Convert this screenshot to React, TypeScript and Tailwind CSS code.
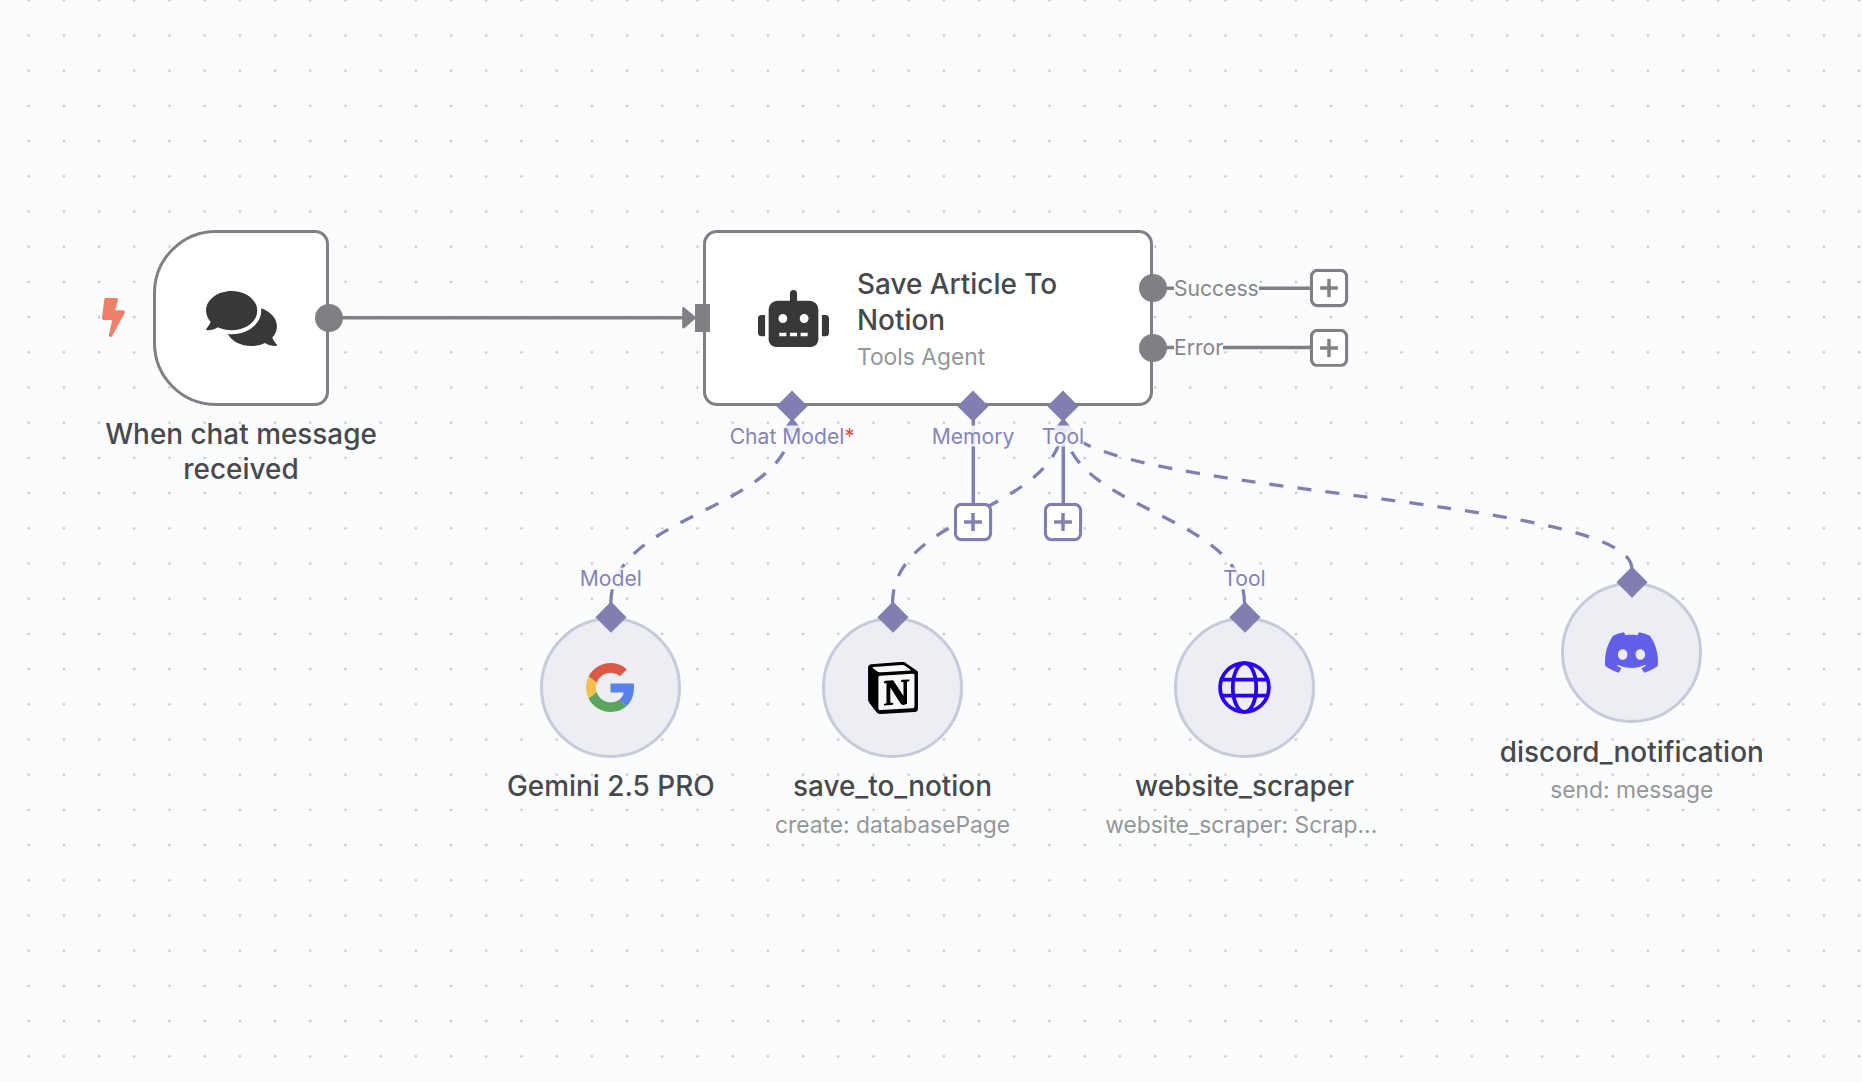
import type { ReactNode } from 'react';
import { FaBolt, FaComments, FaRobot } from 'react-icons/fa';
import { SiDiscord, SiNotion } from 'react-icons/si';

const GRID = 35.2;
const GRAY = '#7f8084';
const PURPLE = '#817fb1';

interface Point {
  x: number;
  y: number;
}

interface ToolNode extends Point {
  key: string;
  label: string;
  subtitle?: string;
  handle?: string;
  icon: ReactNode;
  target: Point;
}

const CHAT_MODEL: Point = { x: 792.3, y: 420.5 };
const TOOL: Point = { x: 1063.3, y: 420.5 };

const toolNodes: ToolNode[] = [
  { key: 'gemini', x: 610.8, y: 617.2, label: 'Gemini 2.5 PRO', handle: 'Model', icon: <GoogleIcon />, target: CHAT_MODEL },
  {
    key: 'notion',
    x: 892.5,
    y: 617.2,
    label: 'save_to_notion',
    subtitle: 'create: databasePage',
    icon: <NotionIcon />,
    target: TOOL,
  },
  {
    key: 'scraper',
    x: 1244.5,
    y: 617.2,
    label: 'website_scraper',
    subtitle: 'website_scraper: Scrap...\u00a0',
    handle: 'Tool',
    icon: <GlobeIcon />,
    target: TOOL,
  },
  {
    key: 'discord',
    x: 1631.8,
    y: 582.4,
    label: 'discord_notification',
    subtitle: 'send: message',
    icon: <SiDiscord className="size-[53px] text-[#6260e8]" />,
    target: TOOL,
  },
];

function GoogleIcon() {
  return (
    <svg viewBox="0 0 48 48" className="size-[49px]">
      <path fill="#dc5a45" d="M24 9.5c3.54 0 6.71 1.22 9.21 3.6l6.85-6.85C35.9 2.38 30.47 0 24 0 14.62 0 6.51 5.38 2.56 13.22l7.98 6.19C12.43 13.72 17.74 9.5 24 9.5z" />
      <path fill="#5981ea" d="M46.9 20H24v9.02h12.94c-.58 2.96-2.26 5.48-4.78 7.18l7.73 6c4.51-4.18 7.09-10.36 7.09-17.65z" />
      <path fill="#f2c14d" d="M10.53 28.59c-.48-1.45-.76-2.99-.76-4.59s.27-3.14.76-4.59l-7.98-6.19C.92 16.46 0 20.12 0 24c0 3.88.92 7.54 2.56 10.78l7.97-6.19z" />
      <path fill="#59a65c" d="M24 48c6.48 0 11.93-2.13 15.89-5.81l-7.73-6c-2.15 1.45-4.92 2.3-8.16 2.3-6.26 0-11.57-4.22-13.47-9.91l-7.98 6.19C6.51 42.62 14.62 48 24 48z" />
    </svg>
  );
}

function NotionIcon() {
  return (
    <svg viewBox="0 0 24 24" className="size-[52px] text-black">
      <path d="M3 2.4L17 1.4L21.6 5V21L6 22.4L3 18z" fill="#f8f8fb" />
      <SiNotion size={24} />
    </svg>
  );
}

function GlobeIcon() {
  return (
    <svg viewBox="0 0 53 53" className="size-[53px]" fill="none" stroke="#2a00f5" strokeWidth={3.8}>
      <circle cx={26.5} cy={26.5} r={24.4} />
      <ellipse cx={26.5} cy={26.5} rx={11.7} ry={24.4} />
      <path d="M3 18.6h47M3 34.6h47" />
    </svg>
  );
}

function edgePath(from: Point, to: Point) {
  const mid = (from.y + to.y) / 2;
  return `M${from.x} ${from.y}C${from.x} ${mid} ${to.x} ${mid} ${to.x} ${to.y}`;
}

function Connections() {
  return (
    <svg className="absolute inset-0 size-full" fill="none">
      <defs>
        <pattern id="dots" x={11.1} y={-17.3} width={GRID} height={GRID} patternUnits="userSpaceOnUse">
          <circle cx={GRID / 2} cy={GRID / 2} r={1.3} fill="#c2c3c7" />
        </pattern>
      </defs>
      <rect width="100%" height="100%" fill="url(#dots)" />
      <g stroke={GRAY} strokeWidth={3.5}>
        <path d="M329 317.8H684" />
        <path d="M1153 288.3H1312M1153 347.5H1312" />
      </g>
      <path d="M683.5 308.4v18.8l11-9.4z" fill={GRAY} stroke={GRAY} strokeWidth={2.6} strokeLinejoin="round" />
      <g stroke={PURPLE} strokeWidth={3.5}>
        <path d="M973.3 410V505M1063.3 410V505" />
        {toolNodes.map((n) => (
          <path key={n.key} d={edgePath({ x: n.x, y: n.y - 13.8 }, n.target)} strokeWidth={3.3} strokeDasharray="14.08 14.08" />
        ))}
      </g>
      {[CHAT_MODEL, TOOL].map((p) => (
        <path
          key={p.x}
          d={`M${p.x - 8.8} ${p.y + 10}h17.6l-8.8 -11z`}
          fill={PURPLE}
          stroke={PURPLE}
          strokeWidth={2.2}
          strokeLinejoin="round"
        />
      ))}
    </svg>
  );
}

// Every pin below is centred on its x / y

function Pin({ x, y, children }: Point & { children: ReactNode }) {
  return (
    <div className="absolute -translate-x-1/2 -translate-y-1/2" style={{ left: x, top: y }}>
      {children}
    </div>
  );
}

function Diamond({ x, y }: Point) {
  return (
    <Pin x={x} y={y}>
      <div className="size-[21.8px] rotate-45 bg-[#817fb1]" />
    </Pin>
  );
}

function Dot({ x, y }: Point) {
  return (
    <Pin x={x} y={y}>
      <div className="size-[28px] rounded-full bg-[#7f8084]" />
    </Pin>
  );
}

function PlusButton({ x, y, color }: Point & { color: string }) {
  return (
    <Pin x={x} y={y}>
      <svg viewBox="0 0 38.6 38.6" className="size-[38.6px]" fill="none" stroke={color} strokeWidth={3.5}>
        <rect x={1.7} y={1.7} width={35.2} height={35.2} rx={6.2} fill="#fff" strokeWidth={3.2} />
        <path d="M19.3 10.4v17.8M10.4 19.3h17.8" />
      </svg>
    </Pin>
  );
}

function HandleLabel({ x, y, required, children }: Point & { required?: boolean; children: string }) {
  return (
    <Pin x={x} y={y}>
      <div className="flex bg-[#fbfcfe]/85 text-[21.12px] leading-[21px] whitespace-nowrap text-[#8583ba]">
        {children}
        {required && <span className="text-[#e0523f]">*</span>}
      </div>
    </Pin>
  );
}

function OutputLabel({ y, children }: { y: number; children: string }) {
  return (
    <div
      className="absolute left-[1174px] -translate-y-1/2 bg-[#fbfcfe] text-[21.12px] leading-[21px] text-[#85868a]"
      style={{ top: y }}
    >
      {children}
    </div>
  );
}

function TriggerNode() {
  return (
    <div className="absolute top-[230px] left-[153px] flex w-[176px] flex-col items-center gap-[11px]">
      <div className="flex h-[176px] w-full items-center justify-center rounded-l-[63px] rounded-r-[14px] border-[3.5px] border-[#7f8084] bg-white">
        <FaComments className="h-[63px] w-[71px] text-[#383838]" />
      </div>
      <div className="w-[300px] text-center text-[27.9px] leading-[35.2px] font-medium text-[#48494c]">
        When chat message received
      </div>
    </div>
  );
}

function AgentNode() {
  return (
    <div className="absolute top-[230px] left-[703px] flex h-[176px] w-[450px] items-center gap-[28px] rounded-[14px] border-[3.5px] border-[#7f8084] bg-white pl-[52px]">
      <FaRobot className="h-[57px] w-[71px] shrink-0 text-[#383838]" />
      <div className="w-[230px] pt-[3px]">
        <div className="text-[27.9px] leading-[35.2px] font-medium text-[#48494c]">Save Article To Notion</div>
        <div className="pt-1 text-[22.8px] leading-[30px] text-[#959698]">Tools Agent</div>
      </div>
    </div>
  );
}

function ToolCircle({ node }: { node: ToolNode }) {
  return (
    <div
      className="absolute flex w-[300px] -translate-x-1/2 flex-col items-center"
      style={{ left: node.x, top: node.y }}
    >
      <div className="flex size-[141px] items-center justify-center rounded-full border-[3.5px] border-[#c6cad9] bg-[#edeef4]">
        {node.icon}
      </div>
      <div className="pt-[11.2px] text-[27.9px] leading-[35.2px] font-medium whitespace-nowrap text-[#48494c]">{node.label}</div>
      {node.subtitle && (
        <div className="pt-[5.7px] text-[22.8px] leading-[30px] whitespace-nowrap text-[#959698]">{node.subtitle}</div>
      )}
    </div>
  );
}

export default function App() {
  return (
    <div className="relative h-[1082px] w-[1862px] overflow-hidden bg-[#fbfcfe] font-['Inter',sans-serif]">
      <Connections />

      <div className="absolute top-[298px] left-[102px]">
        <FaBolt preserveAspectRatio="none" className="h-[39px] w-[23px] text-[#f07f6a]" />
      </div>
      <TriggerNode />
      <AgentNode />
      {toolNodes.map((n) => (
        <ToolCircle key={n.key} node={n} />
      ))}

      <div className="absolute top-[304px] left-[695px] h-[28px] w-[15px] bg-[#7f8084]" />
      <Dot x={329} y={317.8} />
      <Dot x={1153} y={288.3} />
      <Dot x={1153} y={347.8} />
      <Diamond x={792.3} y={405.7} />
      <Diamond x={973.3} y={405.7} />
      <Diamond x={1063.3} y={405.7} />
      {toolNodes.map((n) => (
        <Diamond key={n.key} x={n.x} y={n.y} />
      ))}

      <OutputLabel y={288.3}>Success</OutputLabel>
      <OutputLabel y={346.8}>Error</OutputLabel>
      <HandleLabel x={792.3} y={436} required>
        Chat Model
      </HandleLabel>
      <HandleLabel x={973} y={436}>
        Memory
      </HandleLabel>
      <HandleLabel x={1063} y={436}>
        Tool
      </HandleLabel>
      {toolNodes.map((n) => n.handle && (
        <HandleLabel key={n.key} x={n.x} y={577.5}>
          {n.handle}
        </HandleLabel>
      ))}

      <PlusButton x={1329} y={288.3} color={GRAY} />
      <PlusButton x={1329} y={347.8} color={GRAY} />
      <PlusButton x={973.3} y={522} color={PURPLE} />
      <PlusButton x={1063.3} y={522} color={PURPLE} />
    </div>
  );
}
